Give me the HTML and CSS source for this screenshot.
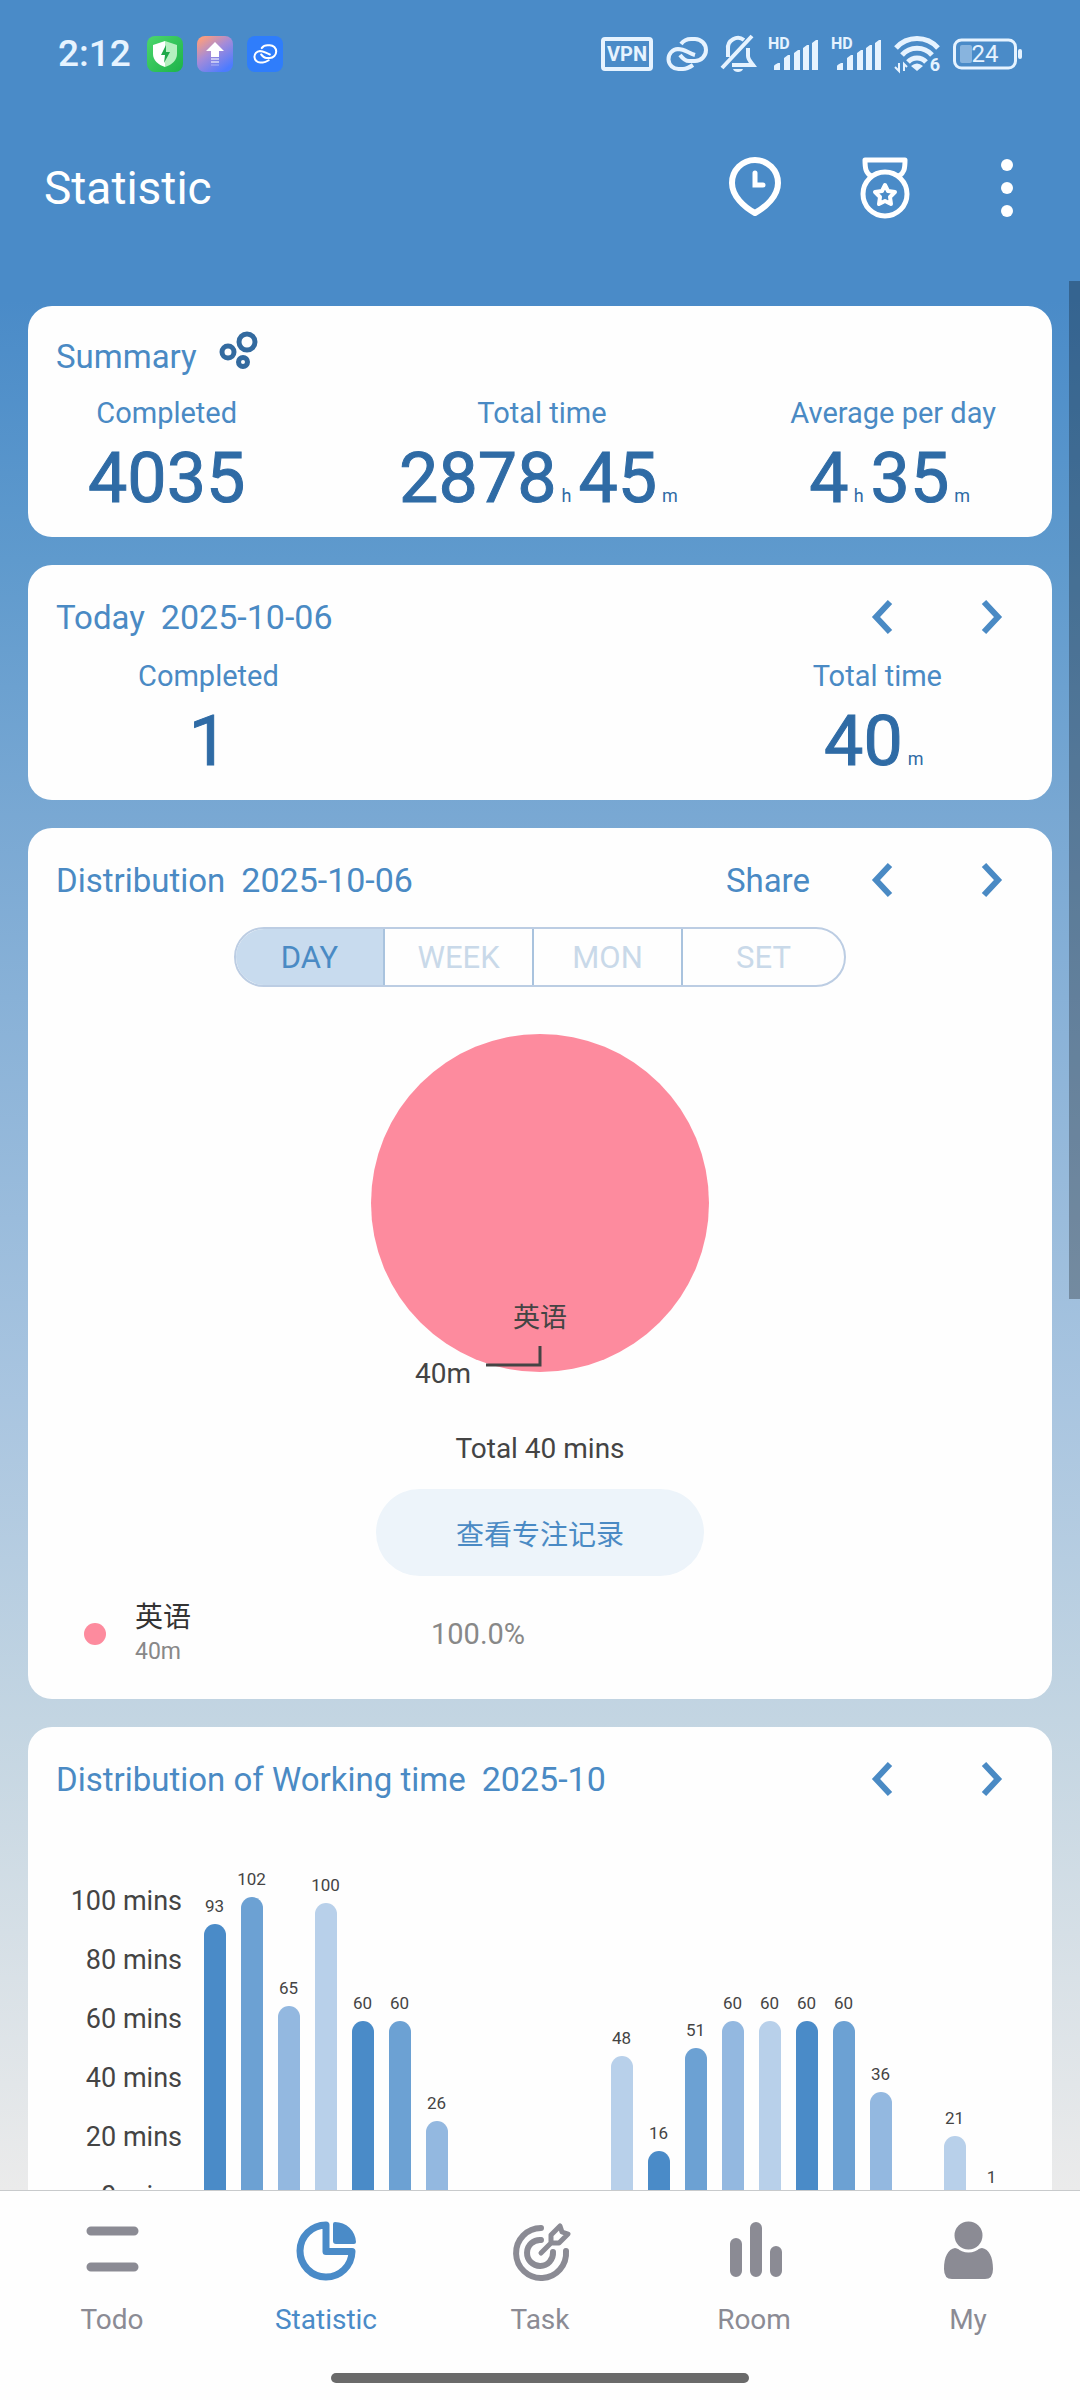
FILE: index.html
```html
<!DOCTYPE html>
<html lang="en">
<head>
<meta charset="utf-8">
<meta name="viewport" content="width=device-width">
<title>Statistic</title>
<link rel="stylesheet" href="styles.css">
</head>
<body>
<div class="status">
  <span class="clock">2:12</span>
  <div class="notices">
    <svg width="36" height="36" viewBox="0 0 36 36"><defs><linearGradient id="g1" x2="1" y2="1"><stop stop-color="#4cd66c"/><stop offset="1" stop-color="#1cb348"/></linearGradient></defs><rect width="36" height="36" rx="8" fill="url(#g1)"/><path d="M18 5l12 4v9c0 6-5 11-12 13z" fill="#b5f0c0"/><path d="M18 5L6 9v9c0 6 5 11 12 13z" fill="#fff"/><path d="M19 9l-5 10h4l-1 8 6-11h-4z" fill="#1fa84a"/></svg>
    <svg width="36" height="36" viewBox="0 0 36 36"><defs><linearGradient id="g2" x2=".7" y2="1"><stop offset=".1" stop-color="#fa9d80"/><stop offset=".5" stop-color="#a58bd8"/><stop offset="1" stop-color="#4c7bff"/></linearGradient></defs><rect width="36" height="36" rx="8" fill="url(#g2)"/><path d="M18 6l9 9h-5v6h-8v-6H9z" fill="#fff"/><path d="M14 23h8M14 26h8" stroke="#fff" stroke-width="1.5" opacity=".7"/><path d="M14 29h8" stroke="#fff" opacity=".4"/></svg>
    <svg width="36" height="36" viewBox="0 0 36 36"><rect width="36" height="36" rx="8" fill="#2f7dfb"/><g transform="translate(6 8) scale(.58)" fill="none" stroke="#fff" stroke-width="3.500" stroke-linecap="round"><path d="M15 7c3-4 6-5 10-5h4a10 10 0 0 1 0 22h-6c-4 0-6-2-9-6"/><path d="M27 28c-3 2-6 4-10 4h-4a10 10 0 0 1-1-20c7 0 10 4 17 6"/></g></svg>
  </div>
  <div class="signals">
    <svg width="52" height="34" viewBox="0 0 52 34"><rect x="2" y="2" width="48" height="30" rx="2" fill="none" stroke="currentColor" stroke-width="4"/><text x="26" y="24" class="t-vpn">VPN</text></svg>
    <svg width="42" height="34" viewBox="0 0 42 34" fill="none" stroke="currentColor" stroke-width="4"><path d="M15 7c3-4 6-5 10-5h4a10 10 0 0 1 0 22h-6c-4 0-6-2-9-6"/><path d="M27 28c-3 2-6 4-10 4h-4a10 10 0 0 1-1-20c7 0 10 4 17 6"/></svg>
    <svg width="34" height="38" viewBox="0 0 34 38" fill="none" stroke="currentColor" stroke-width="4"><path d="M7 22v-8a10 10 0 0 1 16-9M27 13v8c0 3 2 5 5 9H11M1 33L31 1"/><path d="M12 34h10c-1 4-9 4-10 0z" fill="currentColor" stroke="none"/></svg>
    <svg width="50" height="36" viewBox="0 0 50 36"><text x="0" y="13" class="t-hd">HD</text><path d="M6 34v-4q0-1 4-3h2v7zM16 34V22l4-3h2v15zM26 34V17l4-3h2v20zM35 34V12l4-3h2v25zM44 34V7l4-3h2v30z" fill="currentColor"/></svg>
    <svg width="50" height="36" viewBox="0 0 50 36"><text x="0" y="13" class="t-hd">HD</text><path d="M6 34v-4q0-1 4-3h2v7zM16 34V22l4-3h2v15zM26 34V17l4-3h2v20zM35 34V12l4-3h2v25zM44 34V7l4-3h2v30z" fill="currentColor"/></svg>
    <svg width="46" height="36" viewBox="0 0 46 36" fill="none" stroke="currentColor" stroke-width="5"><path d="M2 12a28 28 0 0 1 42 0M8 19a20 20 0 0 1 30 0M14 26a12 12 0 0 1 18 0"/><path d="M23 35l-6-5q6-5 12 0z" fill="currentColor" stroke="none"/><path d="M5 27v8l-4-4M10 35v-7l3 3" stroke-width="2"/><text x="41" y="35" class="t-six">6</text></svg>
    <svg width="69" height="32" viewBox="0 0 69 32"><rect x="1.500" y="2" width="61" height="28" rx="7" fill="none" stroke="currentColor" stroke-width="3"/><rect x="7" y="7" width="12" height="18" rx="2" fill="currentColor" opacity=".4"/><rect x="65" y="11" width="4" height="10" rx="2" fill="currentColor"/><text x="32" y="24" class="t-bat">24</text></svg>
  </div>
</div>

<header class="appbar">
  <h1 class="title">Statistic</h1>
  <div class="actions">
    <button class="icon-btn" aria-label="Timeline"><svg width="52" height="62" viewBox="0 0 52 62" fill="none" stroke="currentColor"><path d="M26 56C15 50 3 39 3 26a23 23 0 0 1 46 0c0 13-12 24-23 30z" stroke-width="6" stroke-linejoin="round"/><path d="M26 16v12h8" stroke-width="5" stroke-linecap="round"/></svg></button>
    <button class="icon-btn" aria-label="Medals"><svg width="52" height="62" viewBox="0 0 52 62" fill="none" stroke="currentColor" stroke-width="5" stroke-linejoin="round"><circle cx="26" cy="37" r="22"/><path d="M12 19C7 16 6 12 6 3h40c0 9-1 13-6 16"/><path d="M26 28l3 6 7 1-5 5 1 7-6-3-6 3 1-7-5-5 7-1z" stroke-width="4"/></svg></button>
    <button class="icon-btn" aria-label="More"><svg width="12" height="62" viewBox="0 0 12 62" fill="currentColor"><circle cx="6" cy="8" r="6"/><circle cx="6" cy="31" r="6"/><circle cx="6" cy="54" r="6"/></svg></button>
  </div>
</header>

<div class="viewport">
<main class="scroller">
  <section class="card card-summary">
    <div class="head"><h2 class="head-title">Summary</h2>
      <svg class="bubbles" width="40" height="40" viewBox="0 0 40 40" fill="none" stroke="currentColor" stroke-width="5"><circle cx="9" cy="21" r="6"/><circle cx="28" cy="11" r="8"/><circle cx="24" cy="31" r="4.500"/></svg></div>
    <div class="stats stats-three">
      <div class="stat"><span class="label">Completed</span><span class="value">4035</span></div>
      <div class="stat"><span class="label">Total time</span><span class="value">2878<small class="unit">h</small>45<small class="unit">m</small></span></div>
      <div class="stat"><span class="label">Average per day</span><span class="value">4<small class="unit">h</small>35<small class="unit">m</small></span></div>
    </div>
  </section>

  <section class="card">
    <div class="head"><h2 class="head-title">Today</h2><span class="date">2025-10-06</span>
      <div class="pager"><button class="arrow" aria-label="Previous day"><svg width="20" height="34" viewBox="0 0 20 34"><path d="M18 2L4 17l14 15"/></svg></button><button class="arrow" aria-label="Next day"><svg width="20" height="34" viewBox="0 0 20 34"><path d="M2 2l14 15L2 32"/></svg></button></div></div>
    <div class="stats stats-two">
      <div class="stat"><span class="label">Completed</span><span class="value">1</span></div>
      <div class="stat"><span class="label">Total time</span><span class="value">40<small class="unit">m</small></span></div>
    </div>
  </section>

  <section class="card card-dist">
    <div class="head"><h2 class="head-title">Distribution</h2><span class="date">2025-10-06</span>
      <div class="pager"><button class="share">Share</button><button class="arrow" aria-label="Previous day"><svg width="20" height="34" viewBox="0 0 20 34"><path d="M18 2L4 17l14 15"/></svg></button><button class="arrow" aria-label="Next day"><svg width="20" height="34" viewBox="0 0 20 34"><path d="M2 2l14 15L2 32"/></svg></button></div></div>
    <div class="tabs">
      <button class="tab tab-on" aria-pressed="true">DAY</button><button class="tab">WEEK</button><button class="tab">MON</button><button class="tab">SET</button>
    </div>
    <svg class="pie" width="340" height="350" viewBox="0 0 340 350">
      <circle cx="170" cy="170" r="169" fill="#fd8b9e"/>
      <path d="M116 332h54v-19" fill="none" stroke="#444" stroke-width="3"/>
      <text x="170" y="294" class="pie-name">英语</text>
      <text x="101" y="350" class="pie-time">40m</text>
    </svg>
    <p class="total">Total 40 mins</p>
    <button class="records">查看专注记录</button>
    <div class="legend">
      <span class="dot"></span>
      <div class="legend-text"><span class="legend-name">英语</span><span class="legend-time">40m</span></div>
      <span class="percent">100.0%</span>
    </div>
  </section>

  <section class="card">
    <div class="head"><h2 class="head-title">Distribution of Working time</h2><span class="date">2025-10</span>
      <div class="pager"><button class="arrow" aria-label="Previous month"><svg width="20" height="34" viewBox="0 0 20 34"><path d="M18 2L4 17l14 15"/></svg></button><button class="arrow" aria-label="Next month"><svg width="20" height="34" viewBox="0 0 20 34"><path d="M2 2l14 15L2 32"/></svg></button></div></div>
    <div class="chart">
      <div class="axis"><span>100 mins</span><span>80 mins</span><span>60 mins</span><span>40 mins</span><span>20 mins</span><span>0 mins</span></div>
      <div class="plot">
        <div class="col">93<i class="bar b1" style="--v:93"></i></div>
        <div class="col">102<i class="bar b2" style="--v:102"></i></div>
        <div class="col">65<i class="bar b3" style="--v:65"></i></div>
        <div class="col">100<i class="bar b4" style="--v:100"></i></div>
        <div class="col">60<i class="bar b1" style="--v:60"></i></div>
        <div class="col">60<i class="bar b2" style="--v:60"></i></div>
        <div class="col">26<i class="bar b3" style="--v:26"></i></div>
        <div class="col"></div>
        <div class="col"></div>
        <div class="col"></div>
        <div class="col"></div>
        <div class="col">48<i class="bar b4" style="--v:48"></i></div>
        <div class="col">16<i class="bar b1" style="--v:16"></i></div>
        <div class="col">51<i class="bar b2" style="--v:51"></i></div>
        <div class="col">60<i class="bar b3" style="--v:60"></i></div>
        <div class="col">60<i class="bar b4" style="--v:60"></i></div>
        <div class="col">60<i class="bar b1" style="--v:60"></i></div>
        <div class="col">60<i class="bar b2" style="--v:60"></i></div>
        <div class="col">36<i class="bar b3" style="--v:36"></i></div>
        <div class="col"></div>
        <div class="col">21<i class="bar b4" style="--v:21"></i></div>
        <div class="col">1<i class="bar b1" style="--v:1"></i></div>
      </div>
    </div>
  </section>
</main>
<div class="thumb"></div>
</div>

<nav class="nav">
  <div class="nav-items">
    <a class="nav-item" href="#todo"><svg width="64" height="64" viewBox="0 0 64 64" stroke="currentColor" stroke-width="9" stroke-linecap="round"><path d="M11 11h43M11 47h43"/></svg>Todo</a>
    <a class="nav-item nav-on" href="#statistic"><svg width="64" height="64" viewBox="0 0 64 64"><path d="M32 5a26 26 0 1 0 26 26.500H32z" fill="none" stroke="currentColor" stroke-width="7" stroke-linejoin="round"/><path d="M41 2a21 21 0 0 1 21 20q0 2-2 2H42q-3 0-3-3V4q0-2 2-2z" fill="currentColor"/></svg>Statistic</a>
    <a class="nav-item" href="#task"><svg width="64" height="64" viewBox="0 0 64 64" fill="none" stroke="currentColor" stroke-width="6" stroke-linecap="round" stroke-linejoin="round"><path d="M33 8a25 25 0 1 0 25 23"/><path d="M33 20a13 13 0 1 0 12 12"/><path d="M33 33l10-10M43 23v-8l9-9 2 6 6 2-9 9z" stroke-width="5"/></svg>Task</a>
    <a class="nav-item" href="#room"><svg width="64" height="64" viewBox="0 0 64 64" stroke="currentColor" stroke-width="12" stroke-linecap="round"><path d="M14 24v27M34 8v43M54 32v19"/></svg>Room</a>
    <a class="nav-item" href="#my"><svg width="64" height="64" viewBox="0 0 64 64" fill="currentColor"><path d="M19 28c7 2 19 2 27 0 7 1 11 9 11 21q0 10-8 10H16q-8 0-8-10c0-12 4-20 11-21z"/><circle cx="32.500" cy="15.500" r="15.500" stroke="#fefefe" stroke-width="3"/></svg>My</a>
  </div>
  <div class="home"></div>
</nav>
</body>
</html>
```
FILE: styles.css
```css
* { box-sizing: border-box; }
body {
  margin: 0;
  height: 100vh;
  display: flex;
  flex-direction: column;
  font-family: Roboto, "Noto Sans CJK SC", sans-serif;
  font-size: 28px;
  color: #444;
  background: linear-gradient(#4a8bc8 0, #4a8bc8 300px, #5f9acd 560px, #79a8d3 815px, #a9c5e0 1400px, #c3d5e2 1720px, #ebebeb 2190px);
}
button { border: 0; padding: 0; background: none; font: inherit; color: inherit; }
h1, h2, p { margin: 0; font-weight: 400; }
svg { display: block; flex: none; overflow: visible; }

/* System status bar */
.status { height: 108px; padding: 0 58px; display: flex; align-items: center; color: #e6f3ff; }
.clock { font-size: 37px; font-weight: 500; line-height: 40px; margin-right: 16px; }
.notices { display: flex; gap: 14px; }
.signals { display: flex; align-items: center; gap: 13px; margin-left: auto; }
.signals text { fill: currentColor; }
.t-vpn { font-size: 20px; font-weight: 700; text-anchor: middle; }
.t-hd { font-size: 16px; font-weight: 700; }
.t-six { font-size: 18px; font-weight: 700; text-anchor: middle; stroke: none; }
.t-bat { font-size: 24px; text-anchor: middle; }

.appbar { height: 173px; padding: 0 67px 14px 44px; display: flex; align-items: center; justify-content: space-between; color: #fff; }
.title { font-size: 46px; line-height: 60px; }
.actions { display: flex; align-items: center; }
.icon-btn { margin-left: 78px; }
.icon-btn:last-child { margin-left: 90px; }

/* Scrolling list of cards */
.viewport { position: relative; flex: 1; min-height: 0; }
.scroller { height: 100%; overflow-y: auto; scrollbar-width: none; padding: 25px 28px 28px; display: flex; flex-direction: column; gap: 28px; }
.thumb { position: absolute; top: 0; right: 0; width: 11px; height: calc(53% + 6px); background: rgba(0, 0, 0, .28); }
.card { flex: none; padding: 24px 28px 13px; background: #fefefe; border-radius: 24px; color: #4a8ac4; }
.head { display: flex; align-items: center; height: 56px; margin-bottom: 12px; font-size: 34px; }
.head-title { font-size: 33px; }
.date { margin-left: 16px; }
.card-summary { padding-top: 22px; }
.card-summary .head { margin-bottom: 10px; }
.bubbles { margin: -10px 0 0 22px; color: #336a9f; }
.pager { display: flex; align-items: center; gap: 90px; margin-left: auto; padding-right: 22px; }
.arrow svg { fill: none; stroke: currentColor; stroke-width: 6; }
.share { font-size: 33px; margin-right: -28px; }

.stats { line-height: 38px; }
.stats-three { display: grid; grid-template-columns: 1fr auto 1fr; padding: 0 28px 0 32px; }
.stats-three .stat:first-child { justify-self: start; }
.stats-three .stat:last-child { justify-self: end; }
.stats-two { display: flex; justify-content: space-between; padding: 0 82px; }
.stat { display: flex; flex-direction: column; align-items: center; }
.label { font-size: 29px; }
.value { font-size: 70px; line-height: 92px; color: #2f6ba5; -webkit-text-stroke: 1px #2f6ba5; }
.unit { font-size: 18px; line-height: 1; margin: 0 7px 0 5px; -webkit-text-stroke: 0; }

.card-dist { display: flex; flex-direction: column; align-items: center; padding-bottom: 30px; }
.card-dist .head { align-self: stretch; margin-bottom: 19px; }
.tabs { width: 612px; max-width: 100%; height: 60px; display: grid; grid-template-columns: 147px 149px 149px 1fr; border: 2px solid #bccde3; border-radius: 30px; overflow: hidden; }
.tab { font-size: 31px; color: #c9d9e9; border-left: 2px solid #a9c3de; }
.tab:first-child { border-left: 0; }
.tab-on { background: #c8dbee; color: #4a8ac4; }
.pie { margin-top: 46px; }
.pie text { fill: #444; }
.pie-name { font-size: 27px; text-anchor: middle; }
.pie-time { font-size: 28px; text-anchor: end; }
.total { margin-top: 46px; line-height: 40px; color: #444; }
.records { margin-top: 20px; width: 328px; height: 87px; border-radius: 44px; background: #edf4fa; font-size: 28px; }
.legend { align-self: stretch; margin-top: 23px; height: 70px; padding-left: 28px; display: grid; grid-template-columns: 51px 296px 1fr; align-items: center; }
.dot { width: 22px; height: 22px; border-radius: 50%; background: #fd8b9e; }
.legend-text { display: flex; flex-direction: column; }
.legend-name { color: #333; line-height: 36px; }
.legend-time { font-size: 23px; line-height: 32px; color: #888; }
.percent { font-size: 29px; color: #888; }

/* Minutes per day; the full plot height stands for 120 minutes */
.chart { display: flex; align-items: flex-start; margin-top: 37px; color: #444; }
.axis { width: 126px; padding-top: 28px; display: flex; flex-direction: column; text-align: right; line-height: 59px; font-size: 27px; }
.plot { flex: 1; height: 354px; margin: 0 14px; display: grid; grid-auto-flow: column; grid-auto-columns: minmax(0, 1fr); }
.col { display: flex; flex-direction: column; justify-content: flex-end; align-items: center; height: 354px; font-size: 17px; line-height: 20px; }
.bar { flex: none; width: 22px; height: calc(var(--v) / 120 * 100%); margin-top: 8px; border-radius: 11px 11px 0 0; }
.b1 { background: #4a8bc8; }
.b2 { background: #6ca1d3; }
.b3 { background: #93b8e0; }
.b4 { background: #b8d0ea; }

/* Bottom navigation */
.nav { flex: none; height: 210px; padding: 29px 5px 17px; display: flex; flex-direction: column; justify-content: space-between; align-items: center; background: #fefefe; border-top: 1px solid #c8cacc; }
.nav-items { align-self: stretch; display: grid; grid-template-columns: repeat(5, 1fr); }
.nav-item { display: flex; flex-direction: column; align-items: center; gap: 18px; line-height: 36px; text-decoration: none; color: #8b8b94; }
.nav-on { color: #4a8bc8; }
.home { width: 39%; height: 10px; border-radius: 5px; background: #6a6a6a; }
```
